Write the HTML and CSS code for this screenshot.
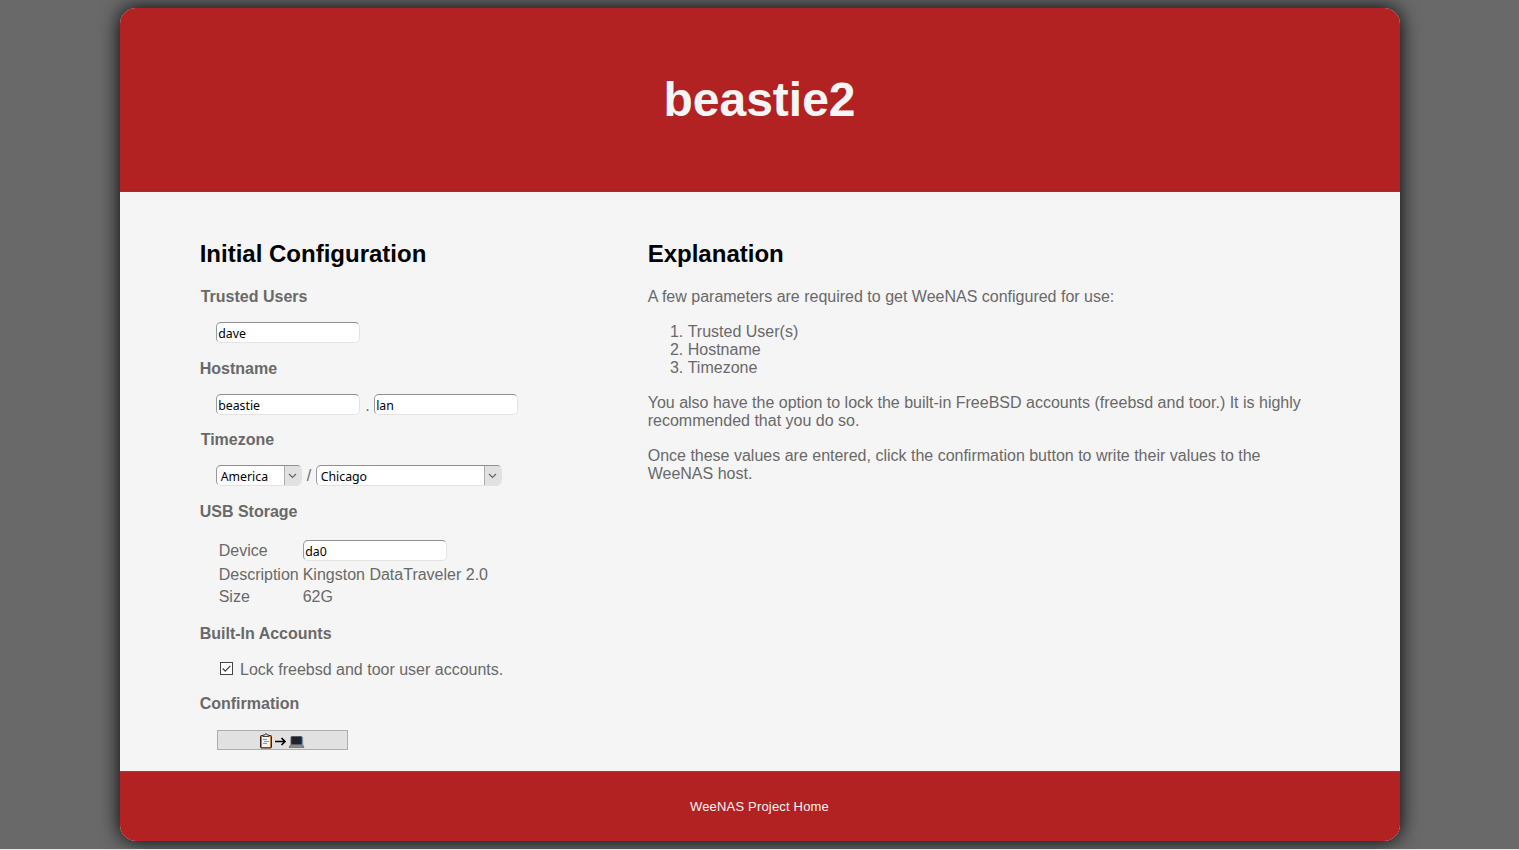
FILE: index.html
```html
<!DOCTYPE html>
<html lang="en">
<head>
<meta charset="utf-8">
<title>beastie2</title>
<link rel="stylesheet" href="styles.css">
</head>
<body>
<div class="page">
  <header class="header"><h1>beastie2</h1></header>
  <main class="main">
    <form class="config">
      <h2>Initial Configuration</h2>
      <section class="group users">
        <h3>Trusted Users</h3>
        <div class="row"><input class="field" type="text" value="dave"></div>
      </section>
      <section class="group host">
        <h3>Hostname</h3>
        <div class="row"><input class="field" type="text" value="beastie"><span class="dot">.</span><input class="field" type="text" value="lan"></div>
      </section>
      <section class="group zone">
        <h3>Timezone</h3>
        <div class="row">
          <div class="select region"><span>America</span><i><svg width="9" height="6" viewBox="0 0 9 6"><path d="M1 1l3.5 3.5L8 1"/></svg></i></div>
          <span class="slash">/</span>
          <div class="select city"><span>Chicago</span><i><svg width="9" height="6" viewBox="0 0 9 6"><path d="M1 1l3.5 3.5L8 1"/></svg></i></div>
        </div>
      </section>
      <section class="group storage">
        <h3>USB Storage</h3>
        <div class="details">
          <span>Device</span><input class="field" type="text" value="da0">
          <span>Description</span><span>Kingston DataTraveler 2.0</span>
          <span>Size</span><span>62G</span>
        </div>
      </section>
      <section class="group accounts">
        <h3>Built-In Accounts</h3>
        <label class="lock"><svg width="13" height="13" viewBox="0 0 13 13"><rect x=".5" y=".5" width="12" height="12"/><path d="M2.7 6.5l2.6 2.6 5-5.2"/></svg><span>Lock freebsd and toor user accounts.</span></label>
      </section>
      <section class="group">
        <h3>Confirmation</h3>
        <button class="confirm" type="button" aria-label="Confirm">
          <svg width="46" height="16" viewBox="0 0 46 16">
            <rect x="1.500" y="2.500" width="11" height="12.500" rx="1" fill="#c07a30" stroke="#33231a"/>
            <rect x="3" y="3.500" width="8" height="10.500" fill="#f4f4f4"/>
            <path d="M4 3.500V2h1.800a1.200 1.200 0 0 1 2.400 0H10v1.500z" fill="#ddd" stroke="#222" stroke-width=".8"/>
            <path d="M4 6.500h4M5 8.500h5M4 10.500h4" stroke="#888" stroke-width=".9"/>
            <path d="M16 8.500h10M22.500 5l3.500 3.500-3.500 3.500" fill="none" stroke="#000" stroke-width="1.600"/>
            <rect x="32" y="3.500" width="11" height="8" rx=".8" fill="#202226" stroke="#555b62"/>
            <path d="M31.500 11.700h12l1.500 2.800H30z" fill="#8a8e93" stroke="#555" stroke-width=".6"/>
            <path d="M43.700 4v7.500l1 2" fill="none" stroke="#3c94d2" stroke-width=".7"/>
          </svg>
        </button>
      </section>
    </form>
    <article class="explain">
      <h2>Explanation</h2>
      <p>A few parameters are required to get WeeNAS configured for use:</p>
      <ol><li>Trusted User(s)</li><li>Hostname</li><li>Timezone</li></ol>
      <p>You also have the option to lock the built-in FreeBSD accounts (freebsd and toor.) It is highly recommended that you do so.</p>
      <p>Once these values are entered, click the confirmation button to write their values to the WeeNAS host.</p>
    </article>
  </main>
  <footer class="footer"><a>WeeNAS Project Home</a></footer>
</div>
</body>
</html>
```
FILE: styles.css
```css
* { box-sizing: border-box; }
html { height: 850px; background: #e8e8e8; overflow: hidden; }
body {
  margin: 0;
  height: 849px;
  padding-top: 8px;
  overflow: hidden;
  background: #696969;
  color: #696969;
  font: 16px/18px "Liberation Sans", Arial, sans-serif;
}
.page {
  width: 1280px;
  height: 833px;
  margin: 0 auto;
  position: relative;
  left: 0.5px;
  display: flex;
  flex-direction: column;
  overflow: hidden;
  border-radius: 16px;
  background: #f5f5f5;
  box-shadow: 0 0 20px #000;
}
.header {
  height: 184px;
  display: flex;
  justify-content: center;
  padding: 64px 1px 0 0;
  background: #b22222;
  border-bottom: 1px solid #a03030;
}
h1 { margin: 0; color: #f5f5f5; font-size: 48px; line-height: 55px; }
.main { flex: 1; display: flex; padding: 48px 80px 0 79.7px; }
.config { width: 448px; }
.explain { width: 672px; }
h2 { margin: 0 0 21px; color: #000; font-size: 24px; line-height: 27px; }
h3 { margin: 0; font-size: 16px; line-height: 18px; }
.users, .zone { height: 72px; }
.users h3, .zone h3 { padding-left: 1px; }
.host { height: 71px; }
.storage { height: 122px; }
.accounts { height: 70px; }
.row { display: flex; height: 21px; margin: 16px 0 0 16px; }
.field, .select {
  height: 21px;
  border: 1px solid #e3e3e3;
  border-top: 1px solid #8f8f8f;
  border-left-color: #999;
  border-radius: 5px;
  background: #fff;
  color: #000;
  font: 12.3px/17px "Noto Sans", sans-serif;
}
.field { width: 144.5px; padding: 2px 0 0 1.5px; outline: 0; }
.dot { width: 13.5px; padding: 3px 0 0 5px; }
.slash { width: 14px; padding: 2px 0 0 5px; }
.select { display: flex; justify-content: space-between; overflow: hidden; }
.select span { padding: 2px 0 0 4px; }
.select i {
  width: 17px;
  display: flex;
  align-items: center;
  justify-content: center;
  border: solid #adadad;
  border-width: 0 0 0 1px;
  background: #e1e1e1;
}
.select path { fill: none; stroke: #666; stroke-width: 1.2; }
.region { width: 86px; }
.city { width: 186px; }
.details {
  display: grid;
  grid-template-columns: 84px auto;
  grid-template-rows: 25px 23px 21px;
  align-items: center;
  margin: 17px 0 0 19px;
}
.lock { display: flex; margin: 18px 0 0 20.3px; }
.lock svg { margin: 1px 7px 0 0; fill: #fff; stroke: #444; stroke-width: 1; }
.lock path { fill: none; stroke-width: 1.3; }
.confirm {
  display: flex;
  width: 131.5px;
  height: 20px;
  margin: 17px 0 0 17.3px;
  padding: 2px 0 0 41px;
  border: 1px solid #adadad;
  background: #e1e1e1;
}
.confirm svg { flex: none; }
p { margin: 0 0 17px; }
ol { margin: 0 0 17px; padding-left: 40px; }
.footer {
  height: 70px;
  padding: 27px 1px 0 0;
  text-align: center;
  background: #b22222;
  border-top: 1px solid #964040;
  color: #f5f5f5;
  font-size: 13px;
  line-height: 16px;
  letter-spacing: 0.18px;
}
```
